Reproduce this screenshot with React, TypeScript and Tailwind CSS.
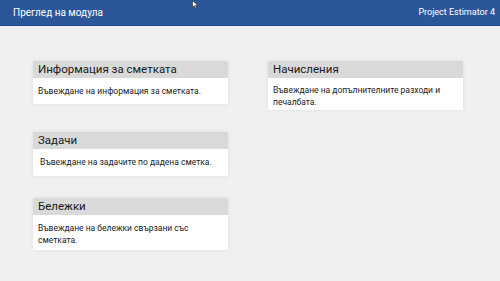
import React from "react";

function Card({ title, body, bodyH, className = "" }: { title: string; body: React.ReactNode; bodyH: string; className?: string }) {
  return (
    <div className={`w-[195px] bg-white shadow-[0_0_4px_rgba(0,0,0,0.08)] ${className}`}>
      <div className="h-[17px] bg-[#d9d9d9] pl-[5px] text-[11.5px] leading-[17px] text-[#1a1a1a]">{title}</div>
      <div className={`px-[5px] text-[8.5px] leading-[11.5px] text-[#222] ${bodyH}`}>{body}</div>
    </div>
  );
}

export default function App() {
  return (
    <div
      className="relative h-[281px] w-[500px] overflow-hidden bg-[#f0f0f0]"
      style={{ fontFamily: 'Roboto, "Noto Sans", sans-serif' }}
    >
      <div className="flex h-[26px] items-center justify-between border-b border-[#1f4a86] bg-[#2b579a] px-[13px] pr-[5px] text-white">
        <span className="text-[10px]">Преглед на модула</span>
        <span className="text-[9px]">Project Estimator 4</span>
      </div>
      <div className="flex gap-[40px] pl-[33px] pt-[35px]">
        <div className="flex flex-col">
          <Card title="Информация за сметката" body="Въвеждане на информация за сметката." bodyH="h-[26px] pt-[8px]" />
          <Card title="Задачи" body={"\u00a0Въвеждане на задачите по дадена сметка."} bodyH="h-[27px] pt-[8px]" className="mt-[28px]" />
          <Card
            title="Бележки"
            body={<>Въвеждане на бележки свързани със<br />сметката.</>}
            bodyH="h-[35px] pt-[8px]"
            className="mt-[22px]"
          />
        </div>
        <div className="flex flex-col">
          <Card
            title="Начисления"
            body={<>Въвеждане на допълнителните разходи и<br />печалбата.</>}
            bodyH="h-[32px] pt-[7px]"
          />
        </div>
      </div>
      <svg className="absolute left-[192px] top-0" width="7" height="9" viewBox="0 0 7 9">
        <path d="M0.5 0.5 L0.5 7.5 L2.3 5.8 L3.6 8.5 L4.6 8 L3.4 5.4 L6 5.4 Z" fill="white" stroke="#333" strokeWidth="0.7" />
      </svg>
    </div>
  );
}
